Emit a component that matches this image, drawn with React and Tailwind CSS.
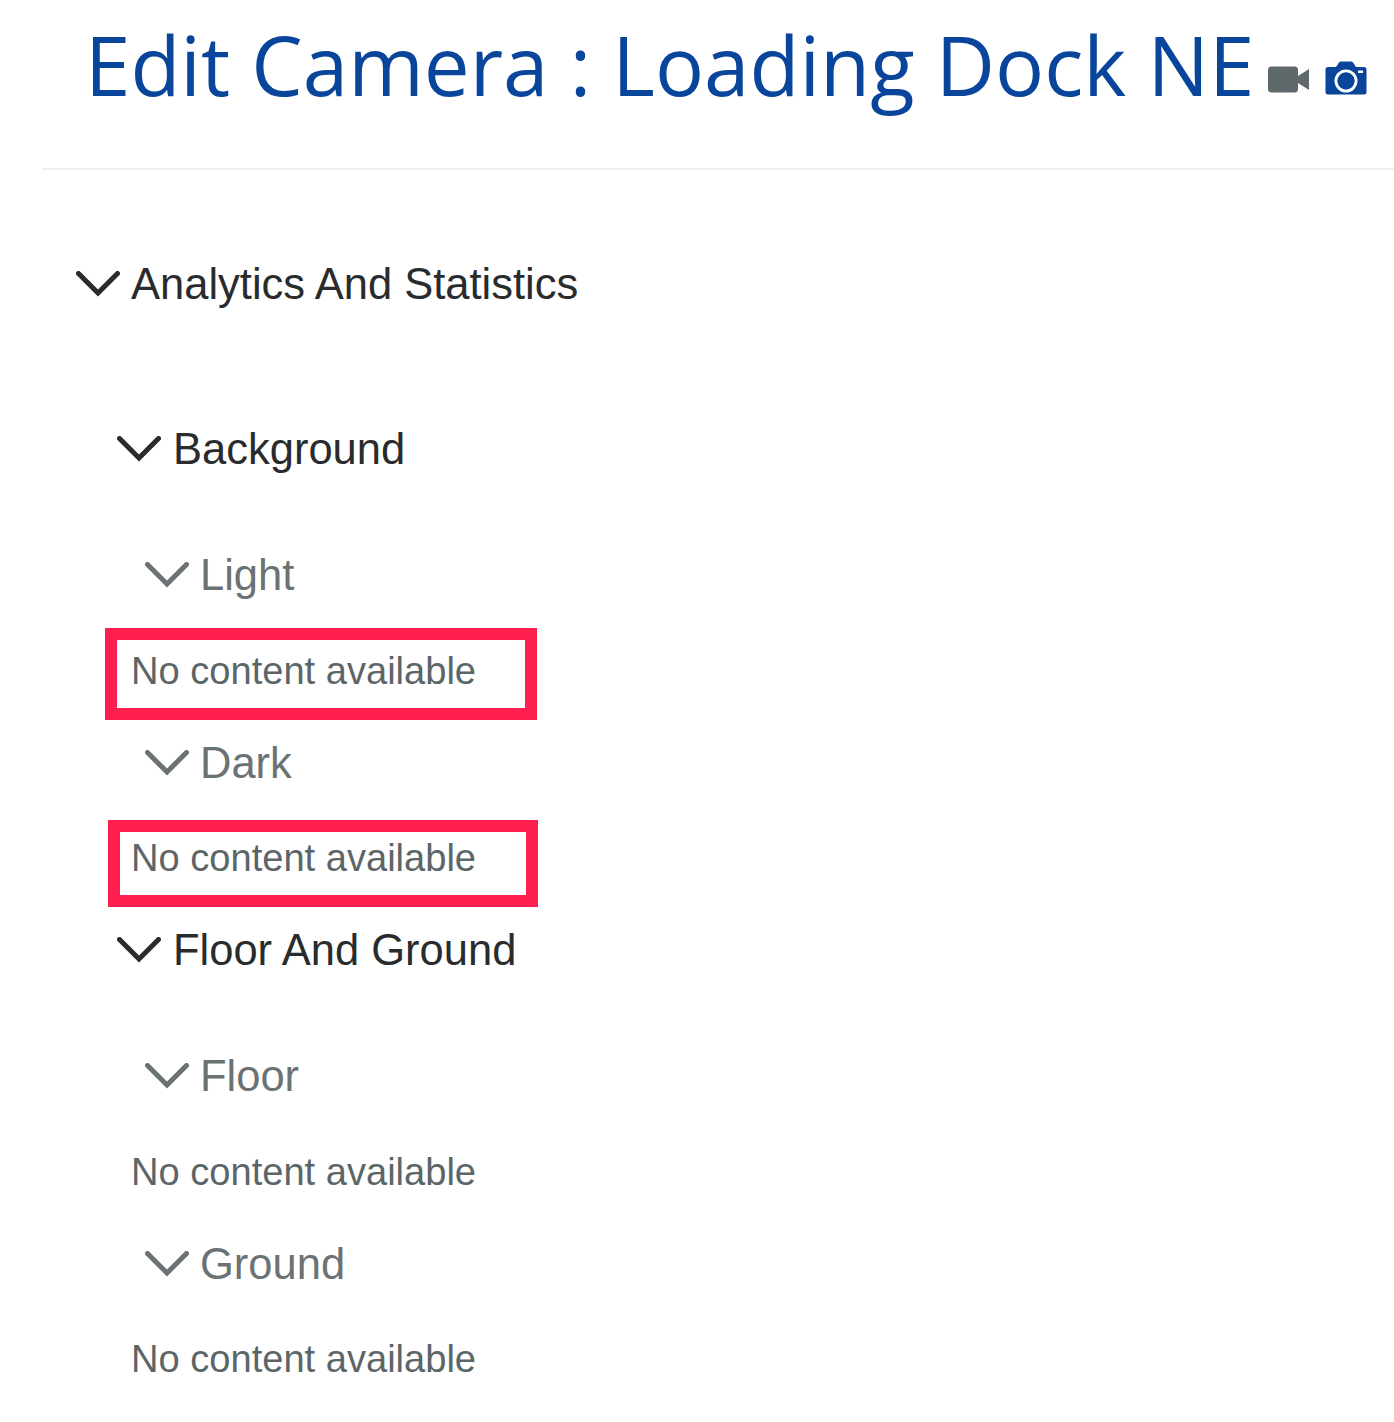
const SANS = "font-['Liberation_Sans',Arial,sans-serif]";

function Chevron({ className }) {
  return (
    <svg width="44" height="26" viewBox="0 0 44 26" fill="none" className={className}>
      <path d="M2.5 2.5 L22 22 L41.5 2.5" stroke="currentColor" strokeWidth="5" strokeLinecap="round" strokeLinejoin="miter" />
    </svg>
  );
}

function MainHeading({ label, indent, mt, gap }) {
  return (
    <div className={`flex h-[60px] items-center ${indent} ${mt} text-[#292b2c]`}>
      <Chevron className="shrink-0" />
      <span className={`${SANS} text-[43.5px] leading-none pt-[2px] ${gap}`}>{label}</span>
    </div>
  );
}

function SubHeading({ label, mt }) {
  return (
    <div className={`flex h-[60px] items-center pl-[145px] ${mt} text-[#6b7274]`}>
      <Chevron className="shrink-0" />
      <span className={`${SANS} text-[43.5px] leading-none pt-[2px] ml-[11px]`}>{label}</span>
    </div>
  );
}

function Empty() {
  return <span className={`${SANS} text-[38.1px] leading-none text-[#5c6568]`}>No content available</span>;
}

export default function App() {
  return (
    <div className="min-h-[1422px] w-[1394px] overflow-hidden bg-white">
      <header className="ml-[42px] h-[170px] border-b-2 border-[#f1f1f1] pl-[43px]">
        <div className="flex h-[129px] items-center">
          <h1 className="font-['Open_Sans',sans-serif] text-[81.7px] font-normal leading-none whitespace-nowrap text-[#0a459c]">
            Edit Camera : Loading Dock NE
          </h1>
          <svg width="42" height="27" viewBox="0 0 42 27" className="ml-[14px] mt-[29px] shrink-0">
            <rect x="0" y="0.5" width="30" height="26" rx="3.5" fill="#5f686b" />
            <path d="M30 10 L41 3 V24 L30 17 Z" fill="#5f686b" />
          </svg>
          <svg width="42" height="34" viewBox="0 0 42 34" className="ml-[15px] mt-[27px] shrink-0">
            <path
              fillRule="evenodd"
              fill="#0a459c"
              d="M3 6 H11 L14 1.5 Q14.6 0.5 16 0.5 H26 Q27.4 0.5 28 1.5 L31 6 H39 Q41.5 6 41.5 8.5 V31 Q41.5 33.5 39 33.5 H3 Q0.5 33.5 0.5 31 V8.5 Q0.5 6 3 6 Z M21 8.5 A11.5 11.5 0 1 0 21 31.5 A11.5 11.5 0 1 0 21 8.5 Z M21 11.5 A8.5 8.5 0 1 1 21 28.5 A8.5 8.5 0 1 1 21 11.5 Z M33 9.5 V12 H38 V9.5 Z"
            />
            <circle cx="21" cy="20" r="8.5" fill="#0a459c" />
          </svg>
        </div>
      </header>

      <MainHeading label="Analytics And Statistics" indent="pl-[76px]" mt="mt-[84px]" gap="ml-[11px]" />
      <MainHeading label="Background" indent="pl-[117px]" mt="mt-[105px]" gap="ml-[12px]" />
      <SubHeading label="Light" mt="mt-[66px]" />
      <div className="ml-[105px] mt-[23px] h-[92px] w-[432px] border-[12px] border-[#ff1f4f] pl-[14px] pt-[12px]">
        <Empty />
      </div>
      <SubHeading label="Dark" mt="mt-[13px]" />
      <div className="ml-[108px] mt-[27px] h-[87px] w-[430px] border-[12px] border-[#ff1f4f] pl-[11px] pt-[7px]">
        <Empty />
      </div>
      <MainHeading label="Floor And Ground" indent="pl-[117px]" mt="mt-[13px]" gap="ml-[12px]" />
      <SubHeading label="Floor" mt="mt-[66px]" />
      <div className="mt-[36px] flex h-[60px] items-center pl-[131px]">
        <Empty />
      </div>
      <SubHeading label="Ground" mt="mt-[32px]" />
      <div className="mt-[35px] flex h-[60px] items-center pl-[131px]">
        <Empty />
      </div>
    </div>
  );
}
